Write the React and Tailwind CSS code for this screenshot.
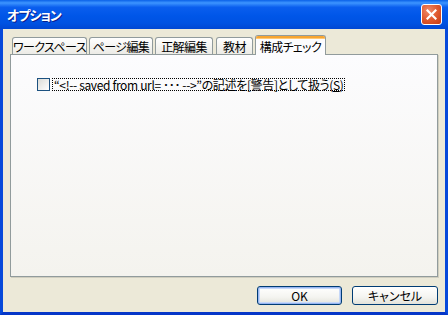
import React from "react";

const font = "font-['Noto_Sans_CJK_JP','Noto_Sans',sans-serif] [font-feature-settings:'palt']";

function Tab({ label, w, ml }) {
  return (
    <div
      className={`h-[17px] ${w} ${ml} shrink-0 flex items-center justify-center rounded-t-[3px] border border-b-0 border-[#919B9C] bg-[linear-gradient(to_bottom,#FFFFFF,#F3F3EF_60%,#ECEBE6)] text-[12px] leading-none text-black whitespace-nowrap tracking-[-0.6px]`}
    >
      <span className="mt-[1px]">{label}</span>
    </div>
  );
}

export default function App() {
  return (
    <div className={`w-[448px] h-[315px] flex flex-col ${font} select-none`}>
      {/* Title bar */}
      <div className="h-[29px] flex items-center justify-between pl-[7px] pr-[6px] bg-[linear-gradient(to_bottom,#0A61E8_0%,#3D95FF_10%,#0A5EEE_25%,#0056E8_55%,#0052E2_80%,#0047D3_100%)]">
        <span className="text-white text-[13px] font-bold leading-none tracking-[-1px] [text-shadow:1px_1px_0_#0A1E8C]">
          オプション
        </span>
        <div className="w-[21px] h-[21px] rounded-[3px] border border-white bg-[radial-gradient(circle_at_35%_30%,#F08A6A,#E05A30_50%,#C43A14)] flex items-center justify-center">
          <svg width="11" height="11" viewBox="0 0 11 11">
            <path d="M1.5 1.5 L9.5 9.5 M9.5 1.5 L1.5 9.5" stroke="white" strokeWidth="2.2" strokeLinecap="square" />
          </svg>
        </div>
      </div>

      {/* Body */}
      <div className="flex-1 flex flex-col bg-[#ECE9D8] border-x-[3px] border-b-[3px] border-x-[#0749DA] border-b-[#0536C8] pl-[7px] pr-[7px] pt-[6px]">
        {/* Tabs */}
        <div className="h-[19px] flex items-end pl-[2px]">
          <Tab label="ワークスペース" w="w-[75px]" ml="" />
          <Tab label="ページ編集" w="w-[64px]" ml="ml-[2px]" />
          <Tab label="正解編集" w="w-[58px]" ml="ml-[2px]" />
          <Tab label="教材" w="w-[37px]" ml="ml-[3px]" />
          <div className="relative z-10 ml-[2px] -mb-px h-[20px] w-[71px] shrink-0 flex flex-col rounded-t-[3px] border border-b-0 border-[#919B9C] bg-[#FCFCFE] overflow-hidden">
            <div className="h-[2px] bg-[#F7A531] shrink-0" />
            <div className="h-px bg-[#FFC873] shrink-0" />
            <div className="flex-1 flex items-center justify-center text-[12px] leading-none text-black whitespace-nowrap tracking-[-0.6px]">
              <span className="mb-[1px]">構成チェック</span>
            </div>
          </div>
        </div>

        {/* Panel */}
        <div className="h-[223px] w-[428px] border border-[#919B9C] bg-[linear-gradient(to_bottom,#FCFCFE,#F4F3EE)] shadow-[1px_1px_0_#D0CEBF] pl-[26px] pt-[23px]">
          <div className="flex items-center h-[13px]">
            <div className="w-[13px] h-[13px] border border-[#1C5180] bg-[linear-gradient(135deg,#DCDCD7,#FFFFFF)] shrink-0" />
            <div className="ml-[2px] h-[13px] px-[1px] flex items-center border border-dotted border-black text-[12px] leading-none text-black whitespace-nowrap tracking-[-0.35px]">
              <span>“&lt;!-- saved from url= ･･･ --&gt;”の記述を[警告]として扱う(<span className="underline">S</span>)</span>
            </div>
          </div>
        </div>

        {/* Buttons */}
        <div className="mt-[9px] flex justify-end">
          <button className="w-[85px] h-[19px] rounded-[3px] border border-[#003C74] bg-[linear-gradient(to_bottom,#FFFFFF,#F4F4F0_60%,#E3E2DA)] shadow-[inset_0_0_0_1px_#97B5F1,inset_0_0_0_2px_#C6D8F8] text-[12px] leading-none text-black flex items-center justify-center">
            OK
          </button>
          <button className="ml-[10px] w-[86px] h-[19px] rounded-[3px] border border-[#003C74] bg-[linear-gradient(to_bottom,#FFFFFF,#F4F4F0_60%,#E3E2DA)] text-[12px] leading-none text-black flex items-center justify-center">
            キャンセル
          </button>
        </div>
      </div>
    </div>
  );
}
